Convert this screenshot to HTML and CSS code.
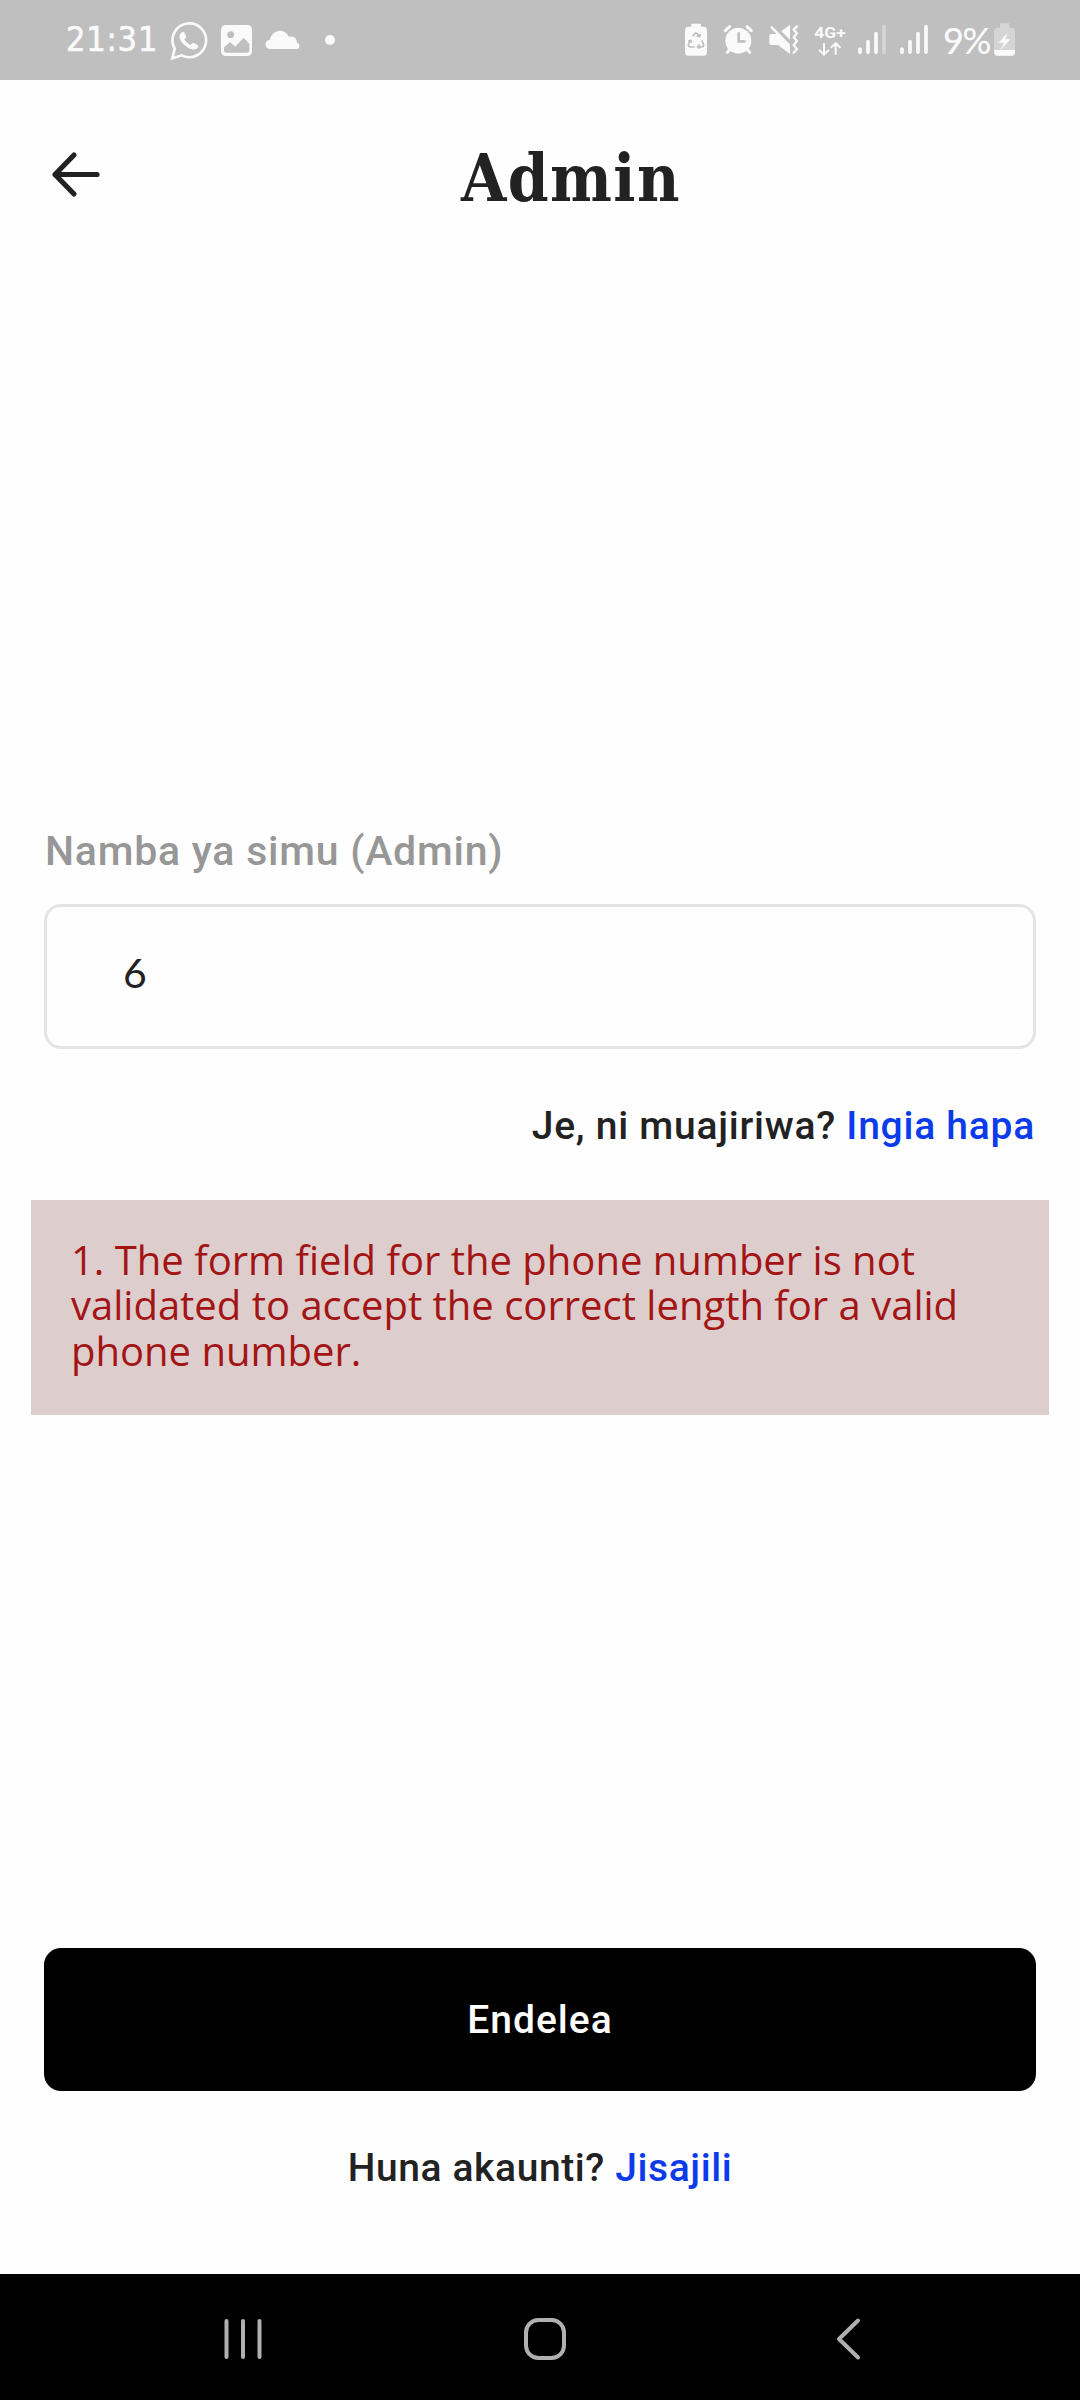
FILE: index.html
```html
<!DOCTYPE html>
<html lang="sw">
<head>
<meta charset="utf-8">
<title>Admin</title>
<link rel="stylesheet" href="styles.css">
</head>
<body>
<div class="screen">
  <div class="status">
    <span class="time">21:31</span>
    <svg class="whatsapp" width="39" height="80" viewBox="390 0 117 240">
      <path d="M397 175l7-29A50.500 50.500 0 1 1 425 166Z" fill="none" stroke="#fafafa" stroke-width="8"/>
      <path d="M423 99c4-5 9-4 11 0l4 9c1 4-3 8-5 10 5 9 11 14 19 17 4-3 6-8 10-6l11 6c4 3 1 8-3 11-8 5-17 3-28-4-11-7-20-17-23-27-2-6 0-12 4-16Z" fill="#fafafa"/>
    </svg>
    <svg class="picture" width="33" height="80" viewBox="540 0 99 240">
      <rect x="543" y="75" width="93" height="93" rx="14" fill="#fafafa"/>
      <circle cx="572" cy="104" r="10" fill="#bfbfbf"/>
      <path d="M552 142l18-16 16 14 25-27 17 18v19q0 8-8 8h-60q-8 0-8-8Z" fill="#bfbfbf"/>
    </svg>
    <svg class="cloud" width="37" height="80" viewBox="675 0 111 240">
      <path d="M691 147a14 14 0 0 1-1-28 30 30 0 0 1 57-9q22-4 24 18a10 10 0 0 1 1 19Z" fill="#fafafa"/>
    </svg>
    <svg class="dot" width="12" height="80" viewBox="852 0 36 240"><circle cx="870" cy="120" r="15" fill="#fafafa"/></svg>

    <svg class="saver" width="24" height="80" viewBox="72 0 72 240">
      <path d="M94 80v-9h29v9h7q11 0 11 11v65q0 11-11 11H86q-11 0-11-11V91q0-11 11-11Z" fill="#fafafa"/>
      <path d="M98 109l6-8q4-3 8 0l6 8m7 12 5 10q3 9-6 10h-9m-11 0H91q-8-2-5-10l5-9M85 124l7-3 3 7m24 6-6 7 6 5m-9-39 9 3 2-8" fill="none" stroke="#bfbfbf" stroke-width="5"/>
    </svg>
    <svg class="alarm" width="31" height="80" viewBox="189 0 93 240">
      <circle cx="235" cy="122" r="39" fill="#fafafa"/>
      <path d="M196 92l13-12m52 0 13 12M210 148l-8 9m59-9 8 9" stroke="#fafafa" stroke-width="9" stroke-linecap="round"/>
      <path d="M236 100v24h17" fill="none" stroke="#bfbfbf" stroke-width="8" stroke-linecap="round"/>
    </svg>
    <svg class="mute" width="32" height="80" viewBox="324 0 96 240">
      <path d="M328 108q0-6 6-6h21l35 36v24L354 135h-20q-6 0-6-6ZM364 94l26-20v45Z" fill="#fafafa"/>
      <path d="M335 82l52 53m24-56-10 10 10 11-10 12 10 11-10 12 10 12-10 11" fill="none" stroke="#fafafa" stroke-width="7" stroke-linecap="round" stroke-linejoin="round"/>
    </svg>
    <svg class="network" width="32" height="80" viewBox="462 0 96 240">
      <text x="463" y="115" class="network-label" textLength="94" lengthAdjust="spacingAndGlyphs">4G+</text>
      <path d="M492 131v33m-13-13 13 13 13-13M527 162v-33m-13 13 13-13 13 13" fill="none" stroke="#fafafa" stroke-width="6" stroke-linecap="round" stroke-linejoin="round"/>
    </svg>
    <svg class="signal" width="30" height="80" viewBox="591 0 90 240" stroke-width="11" stroke-linecap="round">
      <path d="M600 147v10M624 125v32M648 101v56" stroke="#fafafa"/><path d="M672 80v77" stroke="#d5d5d5"/>
    </svg>
    <svg class="signal second" width="30" height="80" viewBox="717 0 90 240" stroke-width="11" stroke-linecap="round">
      <path d="M726 147v10M750 125v32M774 101v56M798 80v77" stroke="#fafafa"/>
    </svg>
    <span class="percent">9%</span>
    <svg width="22" height="80" viewBox="1002 0 66 240">
      <path d="M1020 83v-13h28v13h5q12 0 12 11v62q0 11-11 11h-40q-12 0-12-11V94q0-11 12-11Z" fill="#d5d5d5"/>
      <path d="M1002 150h63v6q0 11-11 11h-40q-12 0-12-11ZM1042 99l-26 29h16l-11 23 30-33h-15Z" fill="#fafafa"/>
    </svg>
  </div>

  <header class="header">
    <svg class="back" width="52" height="48" viewBox="0 0 52 48"><path d="M24 5 5 24.500 24 44M5 24.500h42" fill="none" stroke="#222" stroke-width="5.200" stroke-linecap="round" stroke-linejoin="round"/></svg>
    <h1 class="title">Admin</h1>
  </header>

  <main class="form">
    <label class="label" for="phone">Namba ya simu (Admin)</label>
    <input class="field" id="phone" value="6">
    <p class="employee">Je, ni muajiriwa? <a class="link">Ingia hapa</a></p>
  </main>

  <section class="notice">1. The form field for the phone number is not<br>validated to accept the correct length for a valid<br>phone number.</section>

  <button class="submit">Endelea</button>
  <p class="signup">Huna akaunti? <a class="link">Jisajili</a></p>

  <nav class="nav">
    <svg class="recents" width="40" height="46" viewBox="0 0 40 46"><path d="M3.500 5v36M20 5v36M36.500 5v36" stroke="#b0b0b0" stroke-width="4" stroke-linecap="round"/></svg>
    <svg class="home" width="46" height="46" viewBox="0 0 46 46"><rect x="4" y="4" width="38" height="38" rx="12.500" fill="none" stroke="#b0b0b0" stroke-width="4"/></svg>
    <svg class="previous" width="30" height="46" viewBox="0 0 30 46"><path d="M24 4.500 5 23l19 18.500" fill="none" stroke="#b0b0b0" stroke-width="4" stroke-linecap="round" stroke-linejoin="round"/></svg>
  </nav>
</div>
</body>
</html>
```
FILE: styles.css
```css
* { box-sizing: border-box; }
body { margin: 0; background: #fefefe; }
h1, p { margin: 0; }
svg { display: block; flex: none; }

.screen {
  width: 1080px;
  height: 2400px;
  display: flex;
  flex-direction: column;
  background: #fefefe;
  color: #222;
  font-family: Roboto, "Liberation Sans", sans-serif;
  font-weight: 500;
}

.status {
  height: 80px;
  flex: none;
  display: flex;
  background: #bfbfbf;
  color: #fafafa;
  padding: 0 64px 0 66px;
  white-space: nowrap;
}
.time {
  width: 104px;
  font: 34px/79px "DejaVu Sans Condensed", "DejaVu Sans", sans-serif;
  letter-spacing: 0.8px;
  -webkit-text-stroke: 0.6px #fafafa;
}
.picture { margin-left: 11px; }
.cloud { margin-left: 12px; }
.dot { margin-left: 22px; }
.saver { margin-left: auto; }
.alarm { margin-left: 15px; }
.mute, .network { margin-left: 14px; }
.signal { margin-left: 11px; }
.second { margin-left: 12px; }
.network-label { font: 700 46px Roboto, sans-serif; fill: #fafafa; }
.percent {
  width: 51px;
  margin-left: 14px;
  font: 36px/80px Lato, sans-serif;
  letter-spacing: -1.5px;
  -webkit-text-stroke: 0.2px #fafafa;
}

.header {
  height: 190px;
  flex: none;
  display: flex;
  align-items: flex-start;
  padding: 70px 50px 0;
}
.title {
  margin: -10px 0 0 359px;
  font: bold 65px/76px "DejaVu Serif Condensed", "DejaVu Serif", serif;
  letter-spacing: 1.4px;
}

.form { flex: none; padding: 556px 44px 0; display: flex; flex-direction: column; }
.label {
  padding-left: 1px;
  color: #979797;
  font-size: 41px;
  line-height: 50px;
  letter-spacing: 0.76px;
  white-space: nowrap;
}
.field {
  width: 992px;
  height: 145px;
  margin-top: 28px;
  padding: 0 0 8px 76px;
  border: 3px solid #e4e4e4;
  border-radius: 17px;
  background: #fefefe;
  color: #222;
  font: 41px Lato, sans-serif;
  outline: 0;
}
.employee {
  margin-top: 50px;
  padding-right: 1px;
  text-align: right;
  font-size: 39px;
  line-height: 54px;
  letter-spacing: 0.75px;
  white-space: nowrap;
}
.link { color: #0b3bea; }

.notice {
  flex: none;
  height: 215px;
  margin: 47px 31px 0;
  padding: 37px 40px 0;
  background: #ddcdcd;
  color: #a31515;
  font: 400 40px/45.300px "Open Sans", sans-serif;
  white-space: nowrap;
}

.submit {
  flex: none;
  height: 143px;
  margin: auto 44px 0;
  border: 0;
  border-radius: 17px;
  background: #000;
  color: #fff;
  font: 500 39px Roboto, sans-serif;
  letter-spacing: 1px;
}
.signup {
  flex: none;
  height: 183px;
  padding-top: 50px;
  text-align: center;
  font-size: 39px;
  line-height: 54px;
  letter-spacing: 0.6px;
}

.nav { flex: none; height: 126px; display: flex; align-items: center; background: #000; padding: 4px 0 0 223px; }
.home { margin-left: 259px; }
.previous { margin-left: 266px; }
```
